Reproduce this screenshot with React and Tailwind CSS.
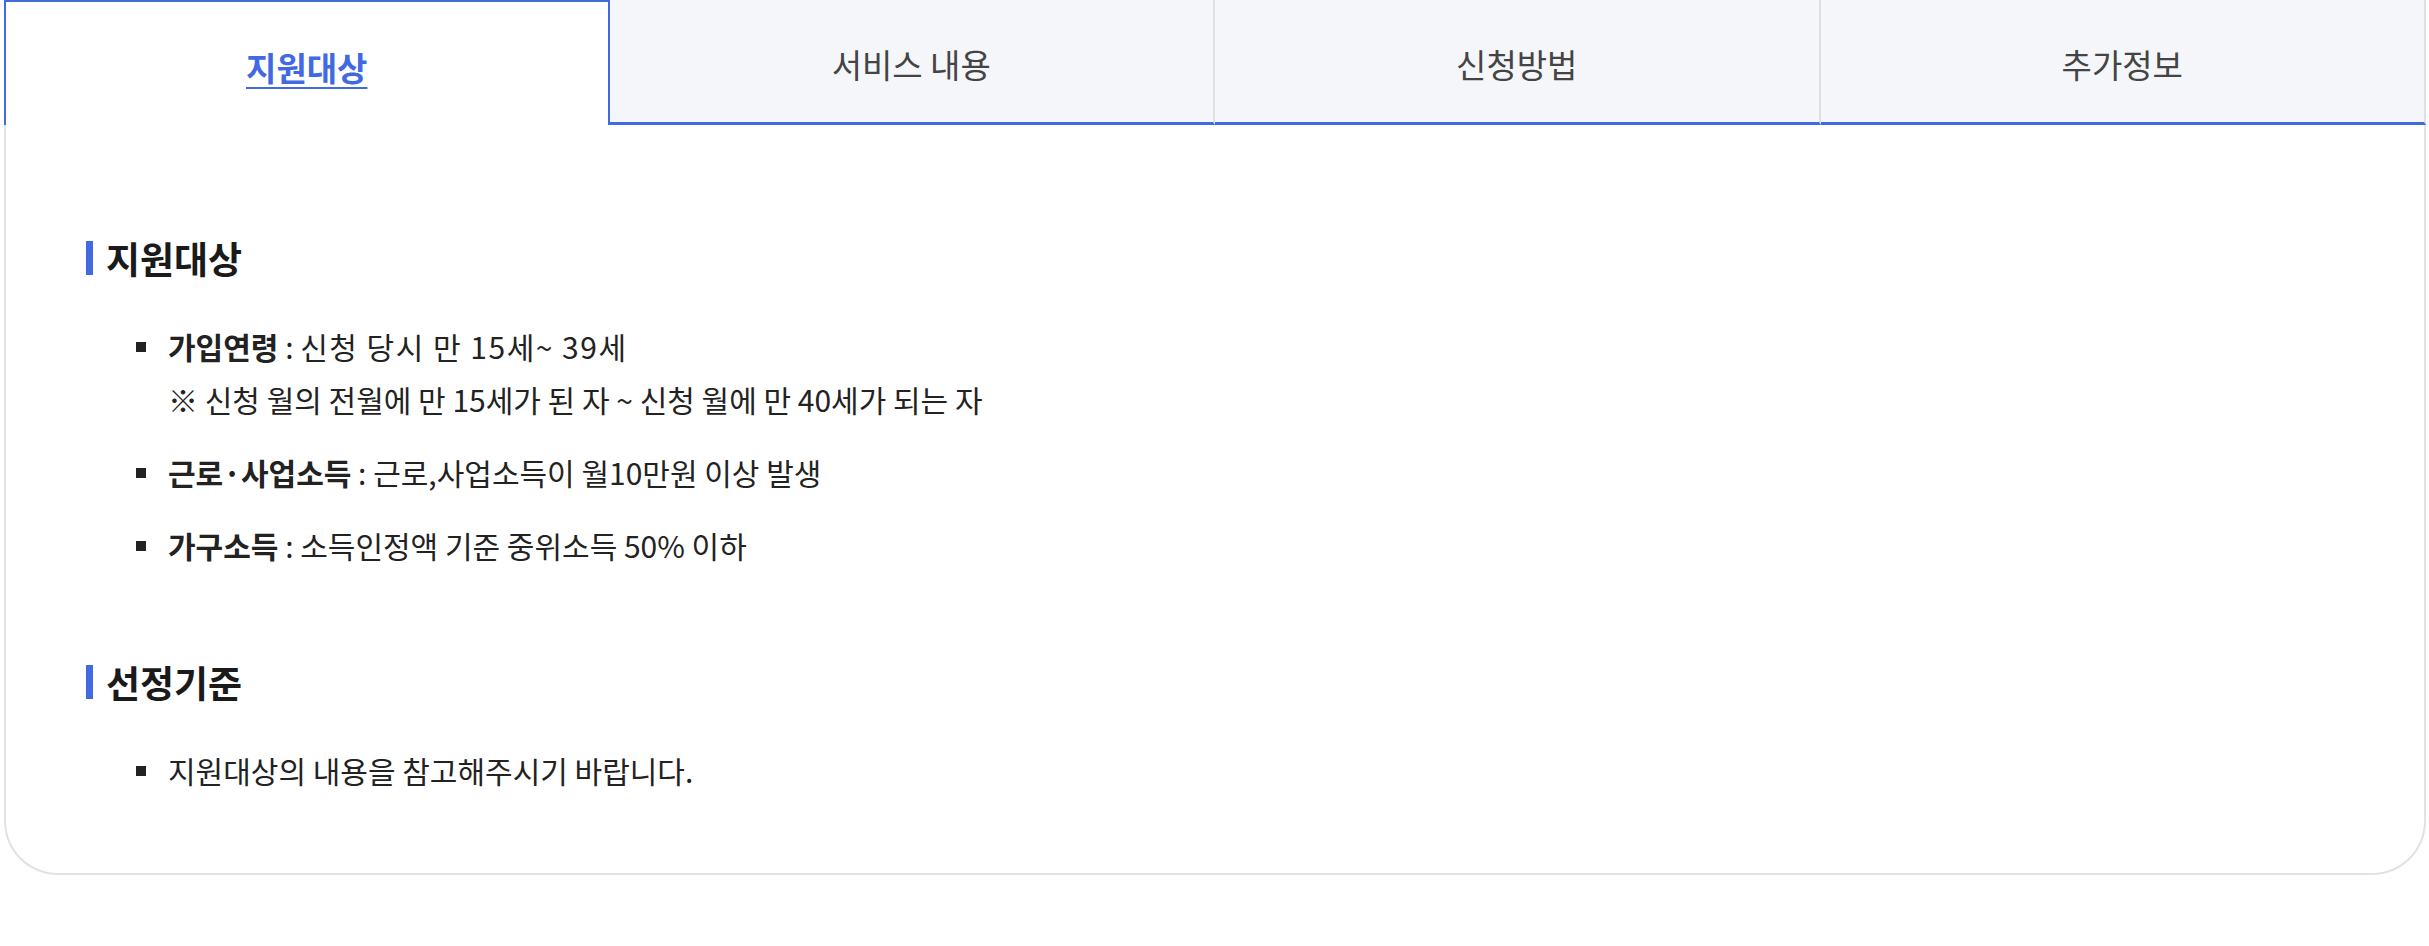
import { useState } from 'react';

const tabs = ['지원대상', '서비스 내용', '신청방법', '추가정보'];

function SectionTitle({ children }) {
  return (
    <h3 className="flex items-center gap-[13px] text-[37px] leading-[50px] font-bold text-[#1a1a1a]">
      <span className="block w-[7px] h-[34px] bg-[#4169e1]" />
      {children}
    </h3>
  );
}

function Item({ label, children, note, wide }) {
  return (
    <li className="flex gap-[22px]">
      <span className="mt-[22px] block w-[10px] h-[10px] shrink-0 bg-[#222]" />
      <div className="text-[30px] leading-[53px] text-[#222]">
        <p>
          {label && <strong className="font-bold">{label}</strong>}
          {label ? ' : ' : ''}
          <span className={wide ? 'tracking-[1.5px]' : ''}>{children}</span>
        </p>
        {note && <p>{note}</p>}
      </div>
    </li>
  );
}

export default function App() {
  const [active, setActive] = useState(0);

  return (
    <div className="min-h-screen bg-white" style={{ fontFamily: '"Noto Sans CJK KR", "Noto Sans", sans-serif' }}>
      <div className="ml-[4px] mr-[3px]">
        {/* Tabs */}
        <div className="grid grid-cols-4 h-[125px]">
          {tabs.map((tab, i) =>
            i === active ? (
              <button
                key={tab}
                onClick={() => setActive(i)}
                className="flex items-center justify-center pt-[8px] bg-white border-2 border-b-0 border-[#4169e1] text-[33px] font-bold text-[#4169e1] underline decoration-2 underline-offset-[6px]"
              >
                {tab}
              </button>
            ) : (
              <button
                key={tab}
                onClick={() => setActive(i)}
                className="flex items-center justify-center pt-[8px] bg-[#f5f6fa] border-r-2 border-r-[#dfe0e4] border-b-[3px] border-b-[#4169e1] text-[33px] font-normal text-[#444]"
              >
                {tab}
              </button>
            )
          )}
        </div>

        {/* Panel */}
        <div className="border-x-2 border-b-2 border-[#e2e2e2] rounded-b-[54px] pl-[80px] pt-[108px] pb-[76px]">
          <SectionTitle>지원대상</SectionTitle>
          <ul className="mt-[37px] pl-[50px] flex flex-col gap-[20px]">
            <Item wide label="가입연령" note="※ 신청 월의 전월에 만 15세가 된 자 ~ 신청 월에 만 40세가 되는 자">
              신청 당시 만 15세~ 39세
            </Item>
            <Item label="근로·사업소득">근로,사업소득이 월10만원 이상 발생</Item>
            <Item label="가구소득">소득인정액 기준 중위소득 50% 이하</Item>
          </ul>

          <div className="mt-[85px]">
            <SectionTitle>선정기준</SectionTitle>
          </div>
          <ul className="mt-[37px] pl-[50px] flex flex-col gap-[20px]">
            <Item>지원대상의 내용을 참고해주시기 바랍니다.</Item>
          </ul>
        </div>
      </div>
    </div>
  );
}
